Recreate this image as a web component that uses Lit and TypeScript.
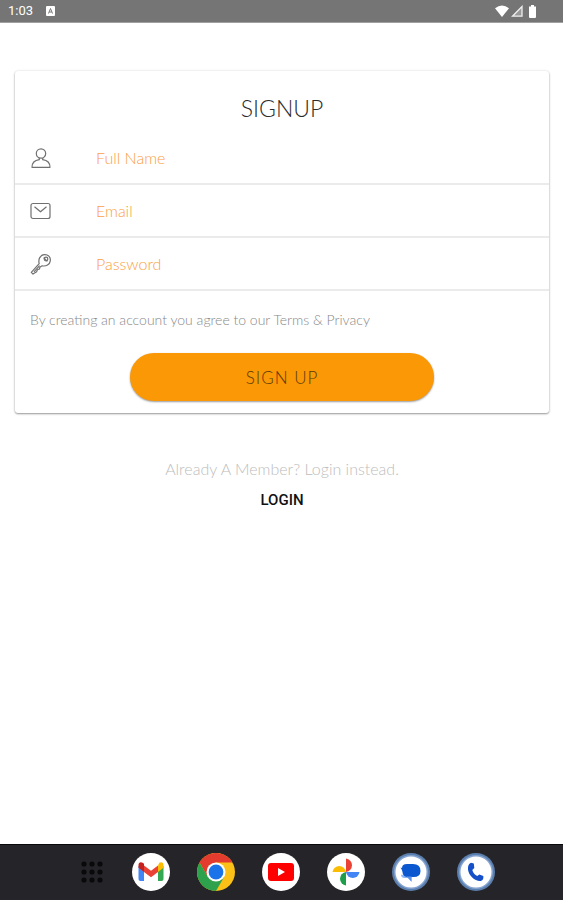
import { LitElement, html, css, svg } from "lit";
import { customElement } from "lit/decorators.js";

const personIcon = svg`<circle cx="11" cy="6.5" r="4.7"/><path d="M9.300 11v1.700C5 13.300 2 16 2 20.300h18c0-4.300-3-7-7.300-7.600V11"/>`;
const mailIcon = svg`<rect x="1" y="3.500" width="19" height="15" rx="2"/><path d="M4.500 6.800l6 5 6-5"/>`;
const keyIcon = svg`<path d="M9.200 10.600C8 6.200 10.200 2 14.300 1.600c3.700-.3 6.500 2.500 6 6.200-.5 3.800-4.300 5.800-8.100 5l-2.200 1.200-.6 2-2 .7-.8 2-3.600 2.400-1.700-1.700z"/><path d="M4 18.800l5.600-6.200"/><circle cx="16" cy="6" r="1.800"/><path d="M13.600 4.600l3.800 3.800"/>`;

@customElement("app-root")
export class AppRoot extends LitElement {
  static styles = css`
    :host {
      display: flex;
      flex-direction: column;
      min-height: 100vh;
      background: #fff;
      font-family: Lato, "Open Sans", sans-serif;
      font-weight: 300;
    }
    * { box-sizing: border-box; }
    .status {
      display: flex;
      align-items: center;
      height: 23px;
      padding: 0 24px 0 8px;
      background: #757575;
      border-bottom: 1px solid #a0a0a0;
      color: #fff;
      font: 400 13px/22px Roboto, sans-serif;
    }
    .badge { width: 9px; height: 10px; margin-left: 13px; }
    .signals { display: flex; align-items: center; gap: 2px; margin-left: auto; }
    svg { display: block; }
    main { flex: 1; padding: 48px 14px 24px 15px; }
    .card {
      display: flex;
      flex-direction: column;
      border-radius: 3px;
      padding-bottom: 12px;
      box-shadow: 0 1px 2px rgba(0, 0, 0, 0.38), 0 0 3px rgba(0, 0, 0, 0.1);
    }
    h1 {
      margin: 0;
      padding-top: 21px;
      font-size: 23px;
      line-height: 32px;
      font-weight: 300;
      text-align: center;
      color: #2c2c2c;
    }
    .row {
      display: flex;
      align-items: center;
      height: 53px;
      padding: 0 15px;
      border-bottom: 2px solid #ebebeb;
    }
    .first { height: 61px; padding-top: 8px; }
    .row svg { flex: none; width: 22px; height: 22px; fill: none; stroke: #707070; stroke-width: 1.2; stroke-linejoin: round; }
    input {
      flex: 1;
      min-width: 0;
      height: 40px;
      margin-left: 44px;
      padding: 0;
      border: 0;
      outline: 0;
      background: none;
      font: inherit;
      font-size: 16px;
      color: #333;
    }
    input::placeholder { color: #fba044; opacity: 1; }
    .terms { margin: 17px 15px 21px; font-size: 14px; line-height: 24px; color: #888; }
    button { font: inherit; border: 0; cursor: pointer; }
    .signup {
      align-self: center;
      width: 57%;
      height: 48px;
      border-radius: 24px;
      background: #fa9805;
      color: #5e3a08;
      font-size: 17px;
      letter-spacing: 1px;
      box-shadow: 0 1px 2px rgba(0, 0, 0, 0.4);
    }
    .member { display: flex; flex-direction: column; align-items: center; padding-top: 44px; }
    .member p { margin: 0; font-size: 16px; line-height: 24px; color: #bdbdbd; }
    .login {
      padding: 0 8px;
      height: 38px;
      background: none;
      color: #111;
      font: 500 15px/38px Roboto, sans-serif;
    }
    .dock {
      display: flex;
      align-items: center;
      justify-content: center;
      gap: 27px;
      height: 56px;
      padding: 0 0 1px 11px;
      background: #252529;
      border-top: 1px solid #09090b;
    }
    .dock button { padding: 0; background: none; border-radius: 50%; }
  `;

  private field(id: string, label: string, type: string, icon: unknown, first = false) {
    return html`<div class="row ${first ? "first" : ""}">
      <svg viewBox="0 0 22 22" aria-hidden="true">${icon}</svg>
      <input id=${id} type=${type} placeholder=${label} aria-label=${label} />
    </div>`;
  }

  private app(name: string, art: unknown) {
    return html`<button aria-label=${name}><svg width="38" height="38" viewBox="0 0 38 38">${art}</svg></button>`;
  }

  render() {
    return html`
      <header class="status">
        <span>1:03</span>
        <svg class="badge" viewBox="0 0 9 10"><rect width="9" height="10" rx="1" fill="#fff"/><path d="M2.500 7.500l2-5 2 5M3.300 6h2.400" fill="none" stroke="#757575"/></svg>
        <div class="signals">
          <svg width="14" height="12" viewBox="0 0 14 12"><path d="M0 3.300Q7-2.300 14 3.300L7 12z" fill="#fff"/></svg>
          <svg width="12" height="12" viewBox="0 0 12 12"><path d="M1.500 11.200H11V1.500z" fill="#999" stroke="#eee" stroke-width="1.300"/></svg>
          <svg width="14" height="13" viewBox="0 0 14 13"><path d="M4 1.500h2V0h3v1.500h2V12q0 1-1 1H5q-1 0-1-1z" fill="#fff"/></svg>
        </div>
      </header>
      <main>
        <form class="card" @submit=${(e: Event) => e.preventDefault()}>
          <h1>SIGNUP</h1>
          ${this.field("name", "Full Name", "text", personIcon, true)}
          ${this.field("email", "Email", "email", mailIcon)}
          ${this.field("password", "Password", "password", keyIcon)}
          <p class="terms">By creating an account you agree to our Terms &amp; Privacy</p>
          <button class="signup" type="submit">SIGN UP</button>
        </form>
        <section class="member">
          <p>Already A Member? Login instead.</p>
          <button class="login">LOGIN</button>
        </section>
      </main>
      <nav class="dock">
        <button aria-label="All apps">
          <svg width="26" height="26" viewBox="0 0 26 26" fill="#09090b">
            ${[5, 13, 21].map((y) => [5, 13, 21].map((x) => svg`<circle cx=${x} cy=${y} r="2.600"/>`))}
          </svg>
        </button>
        ${this.app("Gmail", svg`<circle cx="19" cy="19" r="19" fill="#fff"/>
          <path d="M6.500 13v13q0 2 2 2H12V16z" fill="#4285f4"/>
          <path d="M26 16v12h3.500q2 0 2-2V13z" fill="#34a853"/>
          <path d="M26 12.500v6.500l5.500-4.200V12c0-2.800-2.400-3.500-4.200-2.200z" fill="#fbbc04"/>
          <path d="M12 12.500l7 5.300 7-5.300V19l-7 5.300L12 19z" fill="#ea4335"/>
          <path d="M6.500 12c0-2.800 2.400-3.500 4.200-2.200L12 10.800V19l-5.500-4.200z" fill="#c5221f"/>`)}
        ${this.app("Chrome", svg`<circle cx="19" cy="19" r="19" fill="#fbc116"/>
          <path d="M2.550 9.500A19 19 0 0 1 35.450 9.500H19L10.770 23.750z" fill="#e33b2e"/>
          <path d="M2.550 9.500A19 19 0 0 0 19 38L27.230 23.750H10.770z" fill="#2da14c"/>
          <circle cx="19" cy="19" r="9.500" fill="#fff"/><circle cx="19" cy="19" r="7.400" fill="#1a73e8"/>`)}
        ${this.app("YouTube", svg`<circle cx="19" cy="19" r="19" fill="#fff"/>
          <rect x="6" y="10" width="26" height="18" rx="3" fill="#f00"/><path d="M16 15v8l7-4z" fill="#fff"/>`)}
        ${this.app("Photos", svg`<circle cx="19" cy="19" r="19" fill="#fff"/>
          <path d="M19 5.500a6.800 6.800 0 0 1 0 13.500z" fill="#ea4335"/>
          <path d="M32.500 19a6.800 6.800 0 0 1-13.500 0z" fill="#4285f4"/>
          <path d="M19 32.500a6.800 6.800 0 0 1 0-13.500z" fill="#1e9e4a"/>
          <path d="M5.500 19a6.800 6.800 0 0 1 13.500 0z" fill="#fbbc04"/>`)}
        ${this.app("Messages", svg`<circle cx="19" cy="19" r="19" fill="#5b7fae"/><circle cx="19" cy="19" r="17" fill="#86a4d0"/><circle cx="19" cy="19" r="15.500" fill="#fff"/>
          <path d="M9 21.500q0 3.500 4 3.500h3l3.500 4V24z" fill="#8ab4f8"/>
          <path d="M10 15q0-4 5-4h6q7.500 0 7.500 7 0 6-7 6h-5q-6 0-6-5 0-1.500-2-4.500z" fill="#0b57d0"/>
          <path d="M19.500 28.500v-5h-5z" fill="#5c92e8"/>`)}
        ${this.app("Phone", svg`<circle cx="19" cy="19" r="19" fill="#5b7fae"/><circle cx="19" cy="19" r="17" fill="#86a4d0"/><circle cx="19" cy="19" r="15.500" fill="#fff"/>
          <path d="M14 9.700l2.800.8.500 4.500-2 2c.8 3 2.500 5 5 6l2-1.500 4 1.500q.7 4-2.500 5c-5.500.6-12-5-12.800-11.500-.2-3 .5-6 3-6.800z" fill="#1550c8"/>`)}
      </nav>
    `;
  }
}
